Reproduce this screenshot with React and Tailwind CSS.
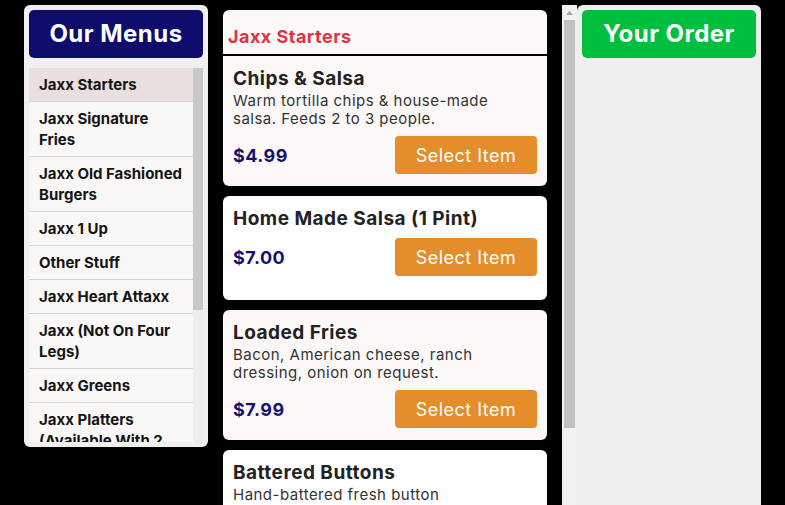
import React from 'react'

const menus = [
  'Jaxx Starters',
  'Jaxx Signature Fries',
  'Jaxx Old Fashioned Burgers',
  'Jaxx 1 Up',
  'Other Stuff',
  'Jaxx Heart Attaxx',
  'Jaxx (Not On Four Legs)',
  'Jaxx Greens',
  'Jaxx Platters (Available With 2 Sides)',
  'Jaxx Wings',
  'Jaxx Sides',
  'Jaxx Kids',
  'Jaxx Desserts',
  'Jaxx Drinks',
]

const items = [
  {
    name: 'Chips & Salsa',
    desc: 'Warm tortilla chips & house-made salsa. Feeds 2 to 3 people.',
    price: '$4.99',
  },
  { name: 'Home Made Salsa (1 Pint)', desc: '', price: '$7.00' },
  {
    name: 'Loaded Fries',
    desc: 'Bacon, American cheese, ranch dressing, onion on request.',
    price: '$7.99',
  },
  {
    name: 'Battered Buttons',
    desc: 'Hand-battered fresh button mushrooms, served with ranch.',
    price: '$6.49',
  },
]

function ItemRow({ item }) {
  return (
    <div className="px-[10px] pt-[12px] pb-[12px]">
      <h3 className="text-[19px] leading-[22px] font-bold text-[#222]">{item.name}</h3>
      {item.desc && (
        <p className="mt-[2px] pr-[22px] text-[15px] leading-[18px] text-[#333]">{item.desc}</p>
      )}
      <div className="mt-[8px] flex items-center justify-between">
        <span className="text-[18px] font-bold text-[#15126f]">{item.price}</span>
        <button className="h-[38px] w-[142px] rounded-[4px] bg-[#e48d2b] text-[18px] text-white">
          Select Item
        </button>
      </div>
      {!item.desc && <div className="h-[12px]" />}
    </div>
  )
}

export default function App() {
  return (
    <div className="flex h-screen overflow-hidden bg-black px-6 pt-[5px] font-['Inter',sans-serif] tracking-[0.03em]">
      <aside className="flex h-[442px] w-[184px] shrink-0 flex-col rounded-md bg-[#f0f0f0] p-[5px]">
        <div className="flex h-[48px] shrink-0 items-center justify-center rounded-[5px] bg-[#0e0c6d] text-[24px] font-bold text-white">
          Our Menus
        </div>
        <div className="mt-[10px] flex min-h-0 flex-1">
          <ul className="min-w-0 flex-1 overflow-hidden">
            {menus.map((m, i) => (
              <li
                key={m}
                className={`border-b border-[#d4d4d4] py-[6px] pr-[9px] pl-[10px] text-[15px] leading-[21px] font-bold tracking-normal text-[#141414] ${
                  i === 0 ? 'bg-[#e9dfdf]' : 'bg-[#faf8f7]'
                }`}
              >
                {m}
              </li>
            ))}
          </ul>
          {/* list scrollbar */}
          <div className="w-[10px] shrink-0 bg-[#eeeeee]">
            <div className="h-[242px] bg-[#c8c8c8]" />
          </div>
        </div>
      </aside>

      <main className="flex h-screen flex-1">
        <div className="min-w-0 flex-1 overflow-hidden px-[15px]">
          <div className="flex flex-col gap-[10px] pt-[5px]">
            <section className="rounded-md bg-[#fbf8f7]">
              <h2 className="border-b-2 border-black px-[5px] pt-[16px] pb-[6px] text-[18px] leading-[22px] font-bold text-[#dc3545]">
                Jaxx Starters
              </h2>
              <ItemRow item={items[0]} />
            </section>
            {items.slice(1).map((item, i) => (
              <section key={item.name} className={`rounded-md ${i % 2 === 0 ? 'bg-white' : 'bg-[#fbf8f7]'}`}>
                <ItemRow item={item} />
              </section>
            ))}
          </div>
        </div>
        {/* page scrollbar */}
        <div className="flex w-[15px] shrink-0 flex-col bg-[#f1f1f1]">
          <div className="flex h-[15px] items-center justify-center">
            <svg width="7" height="4" viewBox="0 0 7 4">
              <path d="M0 4 L3.5 0 L7 4 Z" fill="#a3a3a3" />
            </svg>
          </div>
          <div className="mx-[2px] h-[408px] bg-[#c1c1c1]" />
        </div>
      </main>

      <aside className="h-screen w-[184px] shrink-0 rounded-t-md bg-[#efefef] p-[5px]">
        <div className="flex h-[48px] items-center justify-center rounded-[5px] bg-[#00bf3f] text-[24px] font-bold text-white">
          Your Order
        </div>
      </aside>
    </div>
  )
}
